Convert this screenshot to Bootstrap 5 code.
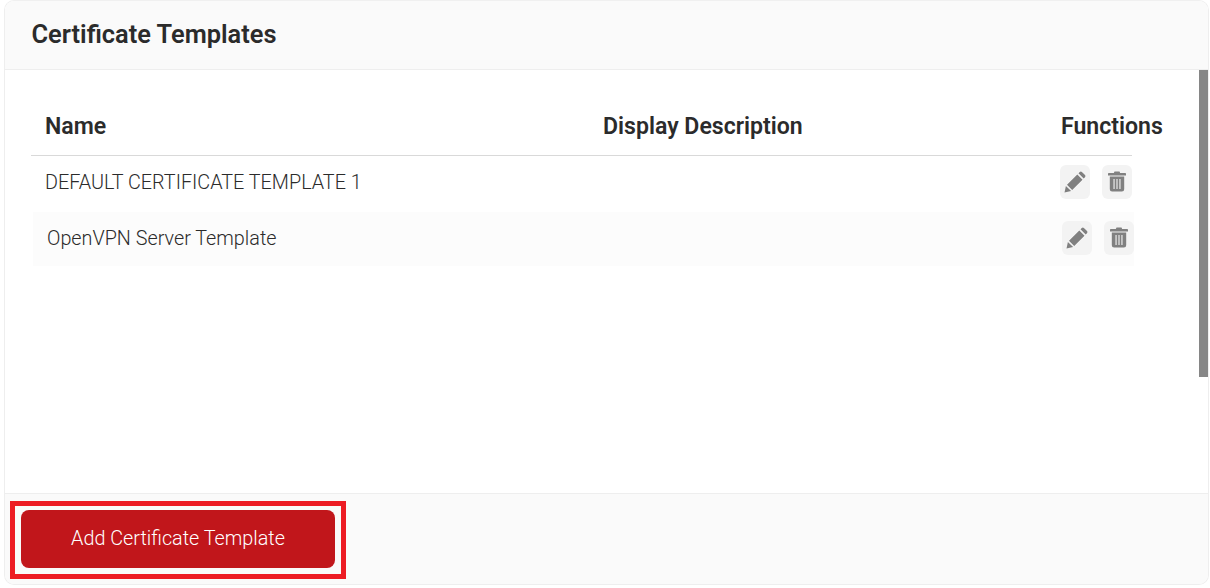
<!DOCTYPE html>
<html lang="en">
<head>
  <meta charset="UTF-8" />
  <meta name="viewport" content="width=device-width, initial-scale=1" />
  <title>Certificate Templates</title>
  <link href="https://cdn.jsdelivr.net/npm/bootstrap@5.3.0/dist/css/bootstrap.min.css" rel="stylesheet" />
  <style>
    body { background: #fff; font-family: Roboto, "Liberation Sans", sans-serif; color: #2b2b2b; overflow: hidden; }
    .cert-card { margin-left: 4px; width: 1205px; height: 585px; border: 1px solid #eee; border-top-color: #f0f0f0; border-radius: 10px; overflow: hidden; position: relative; }
    .cert-head { height: 69px; padding: 0 0 2px 26.5px; background: #fafafa; border-bottom: 1px solid #eee; }
    .cert-head h1 { font-size: 25.4px; font-weight: 600; margin: 0; color: #2b2b2b; }
    .cert-body { height: 423px; padding: 28px 0 0 26px; }
    .cert-cols { width: 1101px; display: grid; grid-template-columns: 558px 458px 71px; padding-left: 14px; align-items: center; }
    .cols-top { height: 58px; padding-top: 1px; border-bottom: 1px solid #d9d9d9; font-size: 23.1px; font-weight: 600; white-space: nowrap; color: #2b2b2b; }
    .cols-row { height: 54px; font-size: 19.8px; font-weight: 300; white-space: nowrap; }
    .cols-alt { background: #fcfcfc; margin: 2px 0 0 2px; }
    .fn-cell { display: flex; gap: 12px; margin: 0 0 2px -1px; }
    .fn-btn { width: 30px; height: 34px; padding: 0; border: 0; border-radius: 6px; background: #f3f3f3; display: flex; align-items: center; justify-content: center; }
    .fn-btn svg { width: 24px; height: 24px; fill: #808080; }
    .cert-scroll { position: absolute; left: 1194px; top: 69px; width: 10px; height: 307px; background: #868686; }
    .cert-foot { height: 91px; background: #fafafa; border-top: 1px solid #eee; padding: 7px 0 0 5px; }
    .add-mark { width: 336px; height: 78px; border: 5px solid #ed1c24; padding: 4px 6px; }
    .add-btn { width: 314px; height: 58px; padding: 0 0 1px; border: 0; border-radius: 8px; background: #c1161b; color: #fff; font-size: 19.8px; font-weight: 300; }
  </style>
</head>
<body>
  <div class="cert-card">
    <div class="cert-head d-flex align-items-center">
      <h1>Certificate Templates</h1>
    </div>

    <div class="cert-body">
      <div class="cert-cols cols-top">
        <div>Name</div>
        <div>Display Description</div>
        <div>Functions</div>
      </div>
      <div class="cert-cols cols-row">
        <div>DEFAULT CERTIFICATE TEMPLATE 1</div>
        <div></div>
        <div class="fn-cell">
          <button type="button" class="fn-btn" aria-label="Edit"><svg viewBox="0 0 24 24"><path d="M1.500 22.500l1.400-6.600 5.200 5.200zM4 14.800L14.300 4.500l5.200 5.200L9.200 20zM15.500 3.300l1.300-1.300a1.500 1.500 0 0 1 2.100 0l3.100 3.100a1.500 1.500 0 0 1 0 2.100L20.700 8.500z"/></svg></button>
          <button type="button" class="fn-btn" aria-label="Delete"><svg viewBox="0 0 24 24"><path fill-rule="evenodd" d="M9.500 1.500h5l.7 1.500h5a.8.8 0 0 1 .8.8v1.700H3V3.800a.8.8 0 0 1 .8-.8h5zM4.800 6.500h14.400v12.700a2.300 2.300 0 0 1-2.300 2.300H7.100a2.300 2.300 0 0 1-2.300-2.300zM8.500 9v10h1.100V9zm2.950 0v10h1.100V9zm2.950 0v10h1.100V9z"/></svg></button>
        </div>
      </div>
      <div class="cert-cols cols-row cols-alt">
        <div>OpenVPN Server Template</div>
        <div></div>
        <div class="fn-cell">
          <button type="button" class="fn-btn" aria-label="Edit"><svg viewBox="0 0 24 24"><path d="M1.500 22.500l1.400-6.600 5.200 5.200zM4 14.800L14.300 4.500l5.200 5.200L9.200 20zM15.500 3.300l1.300-1.300a1.500 1.500 0 0 1 2.100 0l3.100 3.100a1.500 1.500 0 0 1 0 2.100L20.700 8.500z"/></svg></button>
          <button type="button" class="fn-btn" aria-label="Delete"><svg viewBox="0 0 24 24"><path fill-rule="evenodd" d="M9.500 1.500h5l.7 1.500h5a.8.8 0 0 1 .8.8v1.700H3V3.800a.8.8 0 0 1 .8-.8h5zM4.800 6.500h14.400v12.700a2.300 2.300 0 0 1-2.300 2.300H7.100a2.300 2.300 0 0 1-2.300-2.300zM8.500 9v10h1.100V9zm2.950 0v10h1.100V9zm2.950 0v10h1.100V9z"/></svg></button>
        </div>
      </div>
    </div>
    <div class="cert-scroll"></div>

    <div class="cert-foot">
      <div class="add-mark">
        <button type="button" class="add-btn">Add Certificate Template</button>
      </div>
    </div>
  </div>

  <script src="https://cdn.jsdelivr.net/npm/bootstrap@5.3.0/dist/js/bootstrap.bundle.min.js"></script>
</body>
</html>
